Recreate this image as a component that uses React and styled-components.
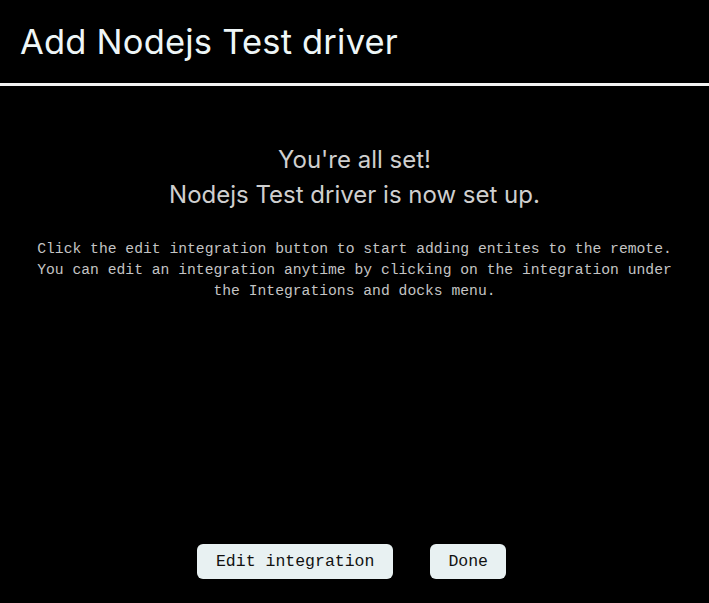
import React from 'react';
import styled, { createGlobalStyle } from 'styled-components';

const GlobalStyle = createGlobalStyle`
  html, body {
    margin: 0;
    padding: 0;
    background: #000;
  }
  #root {
    min-height: 100vh;
  }
`;

const Page = styled.div`
  display: flex;
  flex-direction: column;
  height: 100vh;
  background: #000;
  box-sizing: border-box;
`;

const Header = styled.header`
  height: 83px;
  display: flex;
  align-items: center;
  padding-left: 20px;
  border-bottom: 3px solid #f2f2f2;
`;

const Title = styled.h1`
  margin: 0;
  font-family: Inter, "Open Sans", sans-serif;
  font-weight: 400;
  font-size: 34.5px;
  color: #eef6f7;
  letter-spacing: 0.2px;
`;

const Content = styled.main`
  flex: 1;
  display: flex;
  flex-direction: column;
  align-items: center;
  padding-top: 56px;
`;

const Heading = styled.p`
  margin: 0;
  font-family: Inter, "Open Sans", sans-serif;
  font-size: 24px;
  line-height: 35px;
  color: #cfcfcf;
  text-align: center;
`;

const Description = styled.p`
  margin: 27px 0 0;
  font-family: "Liberation Mono", "DejaVu Sans Mono", monospace;
  font-size: 14.7px;
  line-height: 21px;
  color: #c4c4c4;
  text-align: center;
`;

const Actions = styled.div`
  display: flex;
  justify-content: center;
  gap: 37px;
  padding: 0 6px 24px 0;
`;

const Button = styled.button`
  height: 35px;
  padding: 0 ${p => (p.$wide ? 19 : 18)}px;
  border: none;
  border-radius: 6px;
  background: #e8f1f2;
  color: #111;
  font-family: "Liberation Mono", "DejaVu Sans Mono", monospace;
  font-size: 16.5px;
  cursor: pointer;
`;

export default function App() {
  return (
    <Page>
      <GlobalStyle />
      <Header>
        <Title>Add Nodejs Test driver</Title>
      </Header>
      <Content>
        <Heading>You're all set!</Heading>
        <Heading>Nodejs Test driver is now set up.</Heading>
        <Description>
          Click the edit integration button to start adding entites to the remote.
          <br />
          You can edit an integration anytime by clicking on the integration under
          <br />
          the Integrations and docks menu.
        </Description>
      </Content>
      <Actions>
        <Button $wide>Edit integration</Button>
        <Button>Done</Button>
      </Actions>
    </Page>
  );
}
